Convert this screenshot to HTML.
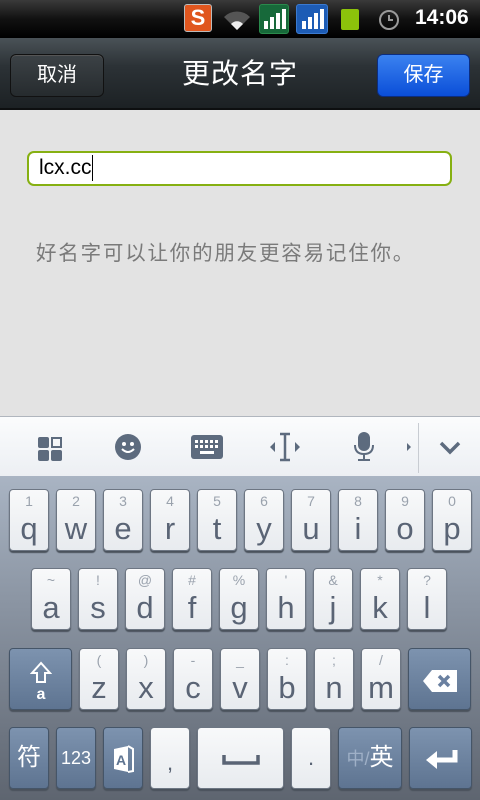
<!DOCTYPE html>
<html><head><meta charset="utf-8"><style>
*{margin:0;padding:0;box-sizing:border-box}
body{width:480px;height:800px;overflow:hidden;position:relative;background:#e3e3e3;font-family:"Liberation Sans","Noto Sans CJK SC",sans-serif}
.a{position:absolute}
#sb{left:0;top:0;width:480px;height:38px;background:linear-gradient(#3a3a3a,#111 50%,#000)}
#tb{left:0;top:38px;width:480px;height:72px;background:linear-gradient(#4a5257,#2c3236 40%,#1c2124);border-bottom:2px solid #0d0f10}
.btn{top:54px;height:43px;border-radius:6px;color:#fff;font-size:20px;text-align:center;line-height:41px}
#inp{left:27px;top:151px;width:425px;height:35px;background:#fff;border:2px solid #86b012;border-radius:7px;font-size:21px;line-height:30px;padding-left:10px;color:#000}
#hint{left:36px;top:236px;font-size:20.5px;color:#7a7a7a;letter-spacing:1.8px;white-space:nowrap}
#tool{left:0;top:416px;width:480px;height:60px;background:linear-gradient(#fbfcfd,#eceff3);border-top:1px solid #b0b6be}
#kb{left:0;top:476px;width:480px;height:324px;background:linear-gradient(#a9b4c3,#8a94a2 40%,#5e6570)}
.k{position:absolute;width:40px;height:62px;background:linear-gradient(#f8f9fa,#e8ebef);border:1px solid #6d7683;border-radius:4px;box-shadow:0 2px 1px #4a525c;color:#5a6475;text-align:center}
.k .s{position:absolute;top:3px;left:0;right:0;font-size:14px;color:#9aa2ad}
.k .m{position:absolute;top:21px;left:0;right:0;font-size:31px}
.d{background:linear-gradient(#7d93af,#5e7491);color:#fff;border-color:#455568}
</style></head><body>
<div id="sb" class="a">
<div class="a" style="left:184px;top:4px;width:28px;height:28px;background:#e0561e;border:1px solid #bbb;border-radius:3px;color:#fff;font-weight:bold;font-size:22px;text-align:center;line-height:26px">S</div>
<svg class="a" style="left:222px;top:7px" width="30" height="24"><path d="M2 10 A18 18 0 0 1 28 10 L15 23Z" fill="#555"/><path d="M9 17A8 8 0 0 1 21 17L15 23Z" fill="#eee"/></svg>
<div class="a" style="left:259px;top:4px;width:30px;height:30px;background:#17693a;border:1px solid #2a8a4c;border-radius:3px"></div>
<svg class="a" style="left:262px;top:7px" width="24" height="24"><rect x="2" y="14" width="4" height="8" fill="#fff"/><rect x="8" y="10" width="4" height="12" fill="#fff"/><rect x="14" y="6" width="4" height="16" fill="#fff"/><rect x="20" y="2" width="4" height="20" fill="#fff"/></svg>
<div class="a" style="left:296px;top:4px;width:32px;height:30px;background:#1d5cb5;border:1px solid #3b7ad0;border-radius:3px"></div>
<svg class="a" style="left:300px;top:7px" width="26" height="24"><rect x="2" y="14" width="4" height="8" fill="#fff"/><rect x="8" y="10" width="4" height="12" fill="#fff"/><rect x="14" y="6" width="4" height="16" fill="#fff"/><rect x="20" y="2" width="4" height="20" fill="#fff"/></svg>
<div class="a" style="left:341px;top:9px;width:18px;height:21px;background:#8cc20b;border-radius:2px"></div>
<svg class="a" style="left:377px;top:7px" width="24" height="24"><circle cx="12" cy="13" r="9" fill="none" stroke="#999" stroke-width="2"/><path d="M12 8v5h4" stroke="#999" stroke-width="2" fill="none"/></svg>
<div class="a" style="left:415px;top:6px;color:#fff;font-weight:bold;font-size:21px">14:06</div>
</div>
<div id="tb" class="a"></div>
<div class="a btn" style="left:10px;width:94px;background:linear-gradient(#3c4246,#262b2e);border:1px solid #111;box-shadow:inset 0 1px #555">取消</div>
<div class="a" style="left:0;width:480px;top:55px;text-align:center;color:#fff;font-size:28px;line-height:38px;letter-spacing:1px">更改名字</div>
<div class="a btn" style="left:377px;width:93px;background:linear-gradient(#3b82f0,#0a4ed8);border:1px solid #0b2d80">保存</div>
<div id="inp" class="a">lcx.cc<span style="display:inline-block;width:1px;height:26px;background:#000;vertical-align:middle"></span></div>
<div id="hint" class="a">好名字可以让你的朋友更容易记住你。</div>
<div id="tool" class="a">
<svg class="a" style="left:37px;top:19px" width="26" height="26"><rect x="1" y="1" width="11" height="11" rx="2" fill="#5d6b7e"/><rect x="15" y="2" width="9" height="9" fill="none" stroke="#5d6b7e" stroke-width="2"/><rect x="1" y="14" width="11" height="11" rx="2" fill="#5d6b7e"/><rect x="14" y="14" width="11" height="11" rx="2" fill="#5d6b7e"/></svg>
<svg class="a" style="left:114px;top:16px" width="28" height="28"><circle cx="14" cy="14" r="13" fill="#5d6b7e"/><circle cx="10" cy="11" r="2" fill="#fff"/><circle cx="18" cy="11" r="2" fill="#fff"/><path d="M8 16q6 6 12 0" stroke="#fff" stroke-width="2" fill="none"/></svg>
<svg class="a" style="left:191px;top:18px" width="32" height="24"><rect width="32" height="24" rx="3" fill="#5d6b7e"/><g fill="#fff"><rect x="4" y="5" width="3" height="3"/><rect x="9" y="5" width="3" height="3"/><rect x="14" y="5" width="3" height="3"/><rect x="19" y="5" width="3" height="3"/><rect x="24" y="5" width="3" height="3"/><rect x="4" y="10" width="3" height="3"/><rect x="9" y="10" width="3" height="3"/><rect x="14" y="10" width="3" height="3"/><rect x="19" y="10" width="3" height="3"/><rect x="24" y="10" width="3" height="3"/><rect x="9" y="16" width="14" height="3"/></g></svg>
<svg class="a" style="left:269px;top:15px" width="32" height="30"><path d="M1 15l5-5v10z M31 15l-5-5v10z" fill="#5d6b7e"/><path d="M11 2h10M16 2v26M11 28h10" stroke="#5d6b7e" stroke-width="2.5"/></svg>
<svg class="a" style="left:352px;top:14px" width="24" height="32"><rect x="6" y="1" width="12" height="19" rx="6" fill="#5d6b7e"/><path d="M3 14q0 9 9 9t9-9M12 23v6M6 29h12" stroke="#5d6b7e" stroke-width="2" fill="none"/></svg>
<svg class="a" style="left:406px;top:25px" width="6" height="10"><path d="M1 1l4 4-4 4z" fill="#5d6b7e"/></svg>
<div class="a" style="left:418px;top:6px;width:1px;height:50px;background:#c8ccd2"></div>
<svg class="a" style="left:439px;top:24px" width="22" height="14"><path d="M2 2l9 9 9-9" stroke="#5d6b7e" stroke-width="3.5" fill="none"/></svg>
</div>
<div id="kb" class="a"></div>

<div class="k" style="left:9px;top:489px"><div class="s">1</div><div class="m">q</div></div>
<div class="k" style="left:56px;top:489px"><div class="s">2</div><div class="m">w</div></div>
<div class="k" style="left:103px;top:489px"><div class="s">3</div><div class="m">e</div></div>
<div class="k" style="left:150px;top:489px"><div class="s">4</div><div class="m">r</div></div>
<div class="k" style="left:197px;top:489px"><div class="s">5</div><div class="m">t</div></div>
<div class="k" style="left:244px;top:489px"><div class="s">6</div><div class="m">y</div></div>
<div class="k" style="left:291px;top:489px"><div class="s">7</div><div class="m">u</div></div>
<div class="k" style="left:338px;top:489px"><div class="s">8</div><div class="m">i</div></div>
<div class="k" style="left:385px;top:489px"><div class="s">9</div><div class="m">o</div></div>
<div class="k" style="left:432px;top:489px"><div class="s">0</div><div class="m">p</div></div>

<div class="k" style="left:31px;top:568px"><div class="s">~</div><div class="m">a</div></div>
<div class="k" style="left:78px;top:568px"><div class="s">!</div><div class="m">s</div></div>
<div class="k" style="left:125px;top:568px"><div class="s">@</div><div class="m">d</div></div>
<div class="k" style="left:172px;top:568px"><div class="s">#</div><div class="m">f</div></div>
<div class="k" style="left:219px;top:568px"><div class="s">%</div><div class="m">g</div></div>
<div class="k" style="left:266px;top:568px"><div class="s">'</div><div class="m">h</div></div>
<div class="k" style="left:313px;top:568px"><div class="s">&amp;</div><div class="m">j</div></div>
<div class="k" style="left:360px;top:568px"><div class="s">*</div><div class="m">k</div></div>
<div class="k" style="left:407px;top:568px"><div class="s">?</div><div class="m">l</div></div>

<div class="k d" style="left:9px;top:648px;width:63px"><svg style="position:absolute;left:20px;top:12px" width="22" height="40"><path d="M11 2L2 12h5v9h8v-9h5z" fill="none" stroke="#fff" stroke-width="2"/><text x="11" y="38" fill="#fff" font-size="16" font-weight="bold" text-anchor="middle" font-family="Liberation Sans">a</text></svg></div>
<div class="k" style="left:79px;top:648px"><div class="s">(</div><div class="m">z</div></div>
<div class="k" style="left:126px;top:648px"><div class="s">)</div><div class="m">x</div></div>
<div class="k" style="left:173px;top:648px"><div class="s">-</div><div class="m">c</div></div>
<div class="k" style="left:220px;top:648px"><div class="s">_</div><div class="m">v</div></div>
<div class="k" style="left:267px;top:648px"><div class="s">:</div><div class="m">b</div></div>
<div class="k" style="left:314px;top:648px"><div class="s">;</div><div class="m">n</div></div>
<div class="k" style="left:361px;top:648px"><div class="s">/</div><div class="m">m</div></div>
<div class="k d" style="left:408px;top:648px;width:63px"><svg style="position:absolute;left:13px;top:20px" width="36" height="24"><path d="M10 1h25v22H10L1 12z" fill="#fff"/><path d="M17 7l10 10M27 7L17 17" stroke="#6a80a0" stroke-width="3.5"/></svg></div>

<div class="k d" style="left:9px;top:727px;font-size:24px;line-height:60px">符</div>
<div class="k d" style="left:56px;top:727px;font-size:18px;line-height:60px">123</div>
<div class="k d" style="left:103px;top:727px"><svg style="position:absolute;left:8px;top:17px" width="24" height="28"><path d="M2 4l14-3v26L2 24z" fill="#fff"/><path d="M16 1l5 3v22l-5 1" fill="none" stroke="#fff" stroke-width="2"/><text x="9" y="20" fill="#5e7491" font-size="14" font-weight="bold" text-anchor="middle" font-family="Liberation Sans">A</text></svg></div>
<div class="k" style="left:150px;top:727px;font-size:22px;line-height:70px">,</div>
<div class="k" style="left:197px;top:727px;width:87px"><svg style="position:absolute;left:24px;top:26px" width="38" height="12"><path d="M2 1v8h34V1" stroke="#5a6475" stroke-width="3.5" fill="none"/></svg></div>
<div class="k" style="left:291px;top:727px;font-size:22px;line-height:60px">.</div>
<div class="k d" style="left:338px;top:727px;width:64px;line-height:60px;font-size:24px"><span style="color:#9fb0c7;font-size:18px">中/</span>英</div>
<div class="k d" style="left:409px;top:727px;width:63px"><svg style="position:absolute;left:15px;top:20px" width="34" height="24"><path d="M30 2v10H10" stroke="#fff" stroke-width="5" fill="none"/><path d="M1 12l11-9v18z" fill="#fff"/></svg></div>
</body></html>
